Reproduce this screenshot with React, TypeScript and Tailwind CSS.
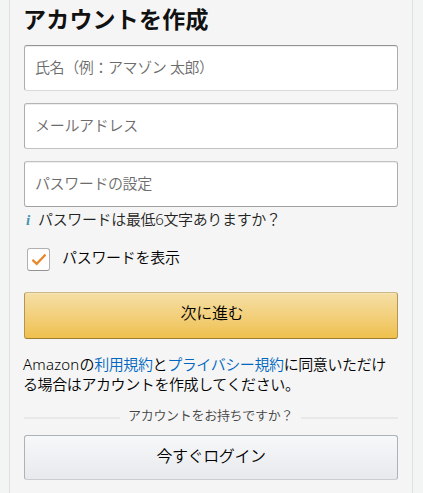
import React from 'react';

const fields = [
  { type: 'text', label: '氏名（例：アマゾン 太郎）', border: 'border-t-[#949494] border-b-[#dadada]', spacing: 'tracking-[-0.4px]' },
  { type: 'email', label: 'メールアドレス', border: 'border-t-[#b5b5b5] border-b-[#c2c2c2]', spacing: 'tracking-[-0.3px]' },
  { type: 'text', label: 'パスワードの設定', border: 'border-t-[#c2c2c2] border-b-[#a0a0a0]', spacing: 'tracking-[-0.4px]' },
];

const CheckIcon: React.FC = () => (
  <svg width="14" height="12" viewBox="0 0 14 12" fill="none" aria-hidden="true">
    <path d="M1.2 6.6 L4.7 9.9 L12.8 1.4" stroke="#e8882a" strokeWidth="2.3" strokeLinecap="square" />
  </svg>
);

const App: React.FC = () => {
  return (
    <div className="h-[493px] overflow-hidden bg-[#f3f5f5] pl-[9px] pr-[10px] font-['Noto_Sans','Noto_Sans_CJK_JP',sans-serif] font-[350] text-black">
      <main className="h-full border-x border-[#dfe1e1] bg-[#f5f5f5] px-[14px]">
        <h1 className="-ml-px h-[45px] whitespace-nowrap pt-1 text-[23px] font-bold leading-[30px] tracking-[0.2px] text-[#111]">アカウントを作成</h1>

        {/* Account details */}
        <form className="flex flex-col" onSubmit={(e) => e.preventDefault()}>
          <div className="flex flex-col gap-3">
            {fields.map((field) => (
              <input
                key={field.label}
                type={field.type}
                placeholder={field.label}
                aria-label={field.label}
                className={`h-[46px] w-full rounded-[3px] border border-x-[#adadad] bg-white px-[10px] pb-[2px] text-[15px] shadow-[inset_0_1px_0_#eee] outline-none placeholder:text-[#6c6c6c] ${field.border} ${field.spacing}`}
              />
            ))}
          </div>

          <div className="flex h-[24px] items-center whitespace-nowrap text-[15px] tracking-[-0.35px]">
            <i className="w-[14px] pl-[2px] pt-[2px] font-['Liberation_Serif',serif] text-[15px] font-bold text-[#4494b0]">i</i>
            <span className="text-[#222]">パスワードは最低6文字ありますか？</span>
          </div>

          <label className="mt-[17px] flex h-[23px] items-center pl-[3px]">
            <span className="flex h-[23px] w-[23px] items-center justify-center rounded-[3px] border border-[#b0b0b0] border-b-[#949494] bg-white">
              <CheckIcon />
            </span>
            <span className="-mt-[5px] ml-3 text-[15px] tracking-[-0.3px]">パスワードを表示</span>
          </label>

          <button
            type="submit"
            className="mt-[21px] h-[47px] rounded-[3px] border border-[#b29651] border-t-[#cdb780] border-b-[#9c7e31] bg-linear-to-b from-[#f5dfa5] to-[#efc04b] pb-[5px] pl-[2px] text-base tracking-[-0.3px] shadow-[inset_0_1px_0_#f6e5bb]"
          >
            次に進む
          </button>
        </form>

        <p className="-ml-px mt-[15px] whitespace-nowrap text-[15px] leading-5 tracking-[-0.4px]">
          <span className="tracking-[0.2px]">Amazon</span>の<a className="text-[#0066c0]">利用規約</a>と<a className="text-[#0066c0]">プライバシー規約</a>に同意いただけ
          <br />
          る場合はアカウントを作成してください。
        </p>

        {/* Existing customers */}
        <div className="mt-[12px] flex h-5 items-center whitespace-nowrap text-[13px] tracking-[-0.3px] text-[#444]">
          <span className="mt-[3px] h-[2px] w-[96px] bg-[#e8e8e8]" />
          <span className="mx-[8px]">アカウントをお持ちですか？</span>
          <span className="mt-[3px] h-[2px] flex-1 bg-[#e8e8e8]" />
        </div>
        <button
          type="button"
          className="mt-[9px] h-[45px] w-full rounded-[3px] border border-[#adb1b8] border-b-[#c9ccd1] bg-linear-to-b from-[#f7f8fa] to-[#e7e9ec] pb-[3px] text-base tracking-[-0.4px]"
        >
          今すぐログイン
        </button>
      </main>
    </div>
  );
};

export default App;
